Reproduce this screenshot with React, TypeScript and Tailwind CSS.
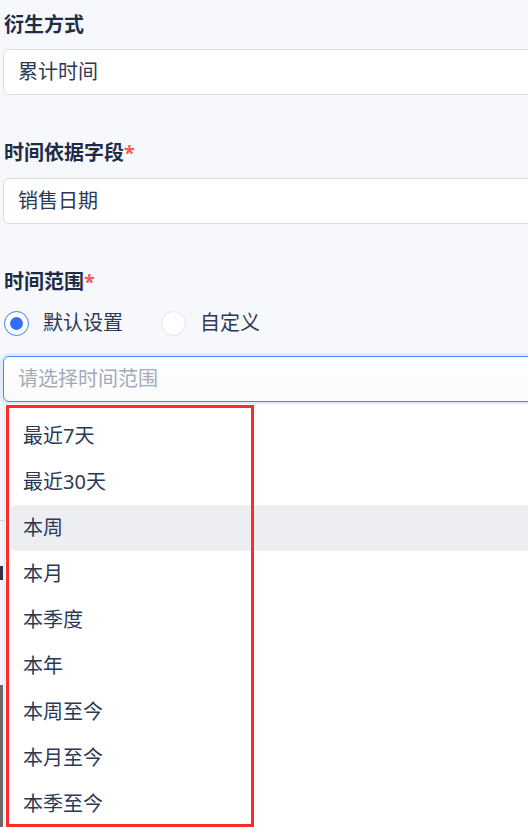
import React from "react";

const items = ["最近7天", "最近30天", "本周", "本月", "本季度", "本年", "本周至今", "本月至今", "本季至今"];

export default function App() {
  return (
    <div
      className="relative w-[528px] h-[827px] overflow-hidden bg-[#f7f8fc] text-[20px] text-[#2b3956]"
      style={{ fontFamily: '"Noto Sans", "Noto Sans CJK SC", sans-serif' }}
    >
      {/* underlying page fragments on the left edge */}
      <div className="absolute left-0 top-[520px] w-[6px] h-px bg-[#d4d7de]" />
      <div className="absolute left-0 top-[566px] w-[3px] h-[14px] bg-[#2b3446]" />
      <div className="absolute left-0 top-[685px] w-[3px] h-[142px] bg-[#6b6b6b]" />

      <div className="flex flex-col pl-[3px] pt-[11px]">
        <div className="pl-[1px] h-[28px] leading-[28px] font-bold text-[#1f2c47]">衍生方式</div>
        <div className="mt-[10px] w-[620px] h-[46px] bg-white border border-[#d9dde6] rounded-[6px] flex items-center pl-[14px]">
          累计时间
        </div>

        <div className="mt-[44px] pl-[1px] h-[28px] leading-[28px] font-bold text-[#1f2c47]">
          时间依据字段<span className="text-[#f25b5b]">*</span>
        </div>
        <div className="mt-[11px] w-[620px] h-[46px] bg-white border border-[#d9dde6] rounded-[6px] flex items-center pl-[14px]">
          销售日期
        </div>

        <div className="mt-[44px] pl-[1px] h-[28px] leading-[28px] font-bold text-[#1f2c47]">
          时间范围<span className="text-[#f25b5b]">*</span>
        </div>

        <div className="mt-[13px] h-[28px] flex items-center">
          <div className="ml-[1px] w-[25px] h-[25px] rounded-full border-[1.5px] border-[#3f7dff] bg-white flex items-center justify-center">
            <div className="w-[13px] h-[13px] rounded-full bg-[#3170ff]" />
          </div>
          <span className="ml-[14px]">默认设置</span>
          <div className="ml-[38px] w-[25px] h-[25px] rounded-full border-[1.5px] border-[#e0e4eb] bg-white" />
          <span className="ml-[14px]">自定义</span>
        </div>

        <div className="relative mt-[19px]">
          <div className="w-[620px] h-[46px] bg-gradient-to-b from-white to-[#fafafa] border border-[#4a86ff] rounded-[6px] shadow-[0_0_0_3px_#e2eafb] flex items-center pl-[14px] text-[#a3aab8]">
            请选择时间范围
          </div>
          <div className="absolute left-[1px] top-[48px] w-[620px] bg-white border-l border-[#e6e8ee] pt-[9px] pl-[6px] shadow-[0_2px_8px_rgba(0,0,0,0.06)]">
            {items.map((t, i) => (
              <div
                key={t}
                className={
                  "h-[46px] flex items-center pl-[12px] rounded-l-[5px] " +
                  (i === 2 ? "bg-[#edeef2]" : "")
                }
              >
                {t}
              </div>
            ))}
          </div>
        </div>
      </div>

      {/* red annotation box */}
      <div className="absolute left-[6px] top-[405px] w-[248px] h-[422px] border-[3px] border-[#ff2b2b] pointer-events-none" />
    </div>
  );
}
